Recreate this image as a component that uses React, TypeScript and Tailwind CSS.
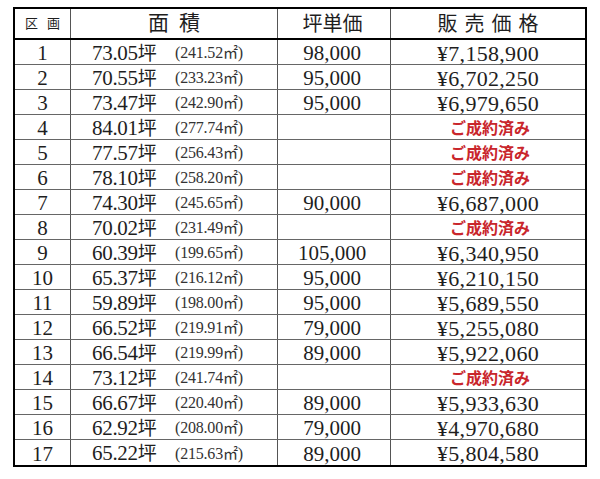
import React from "react";

type Lot = {
    no: number;
    tsubo: string;
    sqm: string;
    unit?: string;
    price?: string;
};

const lots: Lot[] = [
    { no: 1, tsubo: "73.05", sqm: "241.52", unit: "98,000", price: "¥7,158,900" },
    { no: 2, tsubo: "70.55", sqm: "233.23", unit: "95,000", price: "¥6,702,250" },
    { no: 3, tsubo: "73.47", sqm: "242.90", unit: "95,000", price: "¥6,979,650" },
    { no: 4, tsubo: "84.01", sqm: "277.74" },
    { no: 5, tsubo: "77.57", sqm: "256.43" },
    { no: 6, tsubo: "78.10", sqm: "258.20" },
    { no: 7, tsubo: "74.30", sqm: "245.65", unit: "90,000", price: "¥6,687,000" },
    { no: 8, tsubo: "70.02", sqm: "231.49" },
    { no: 9, tsubo: "60.39", sqm: "199.65", unit: "105,000", price: "¥6,340,950" },
    { no: 10, tsubo: "65.37", sqm: "216.12", unit: "95,000", price: "¥6,210,150" },
    { no: 11, tsubo: "59.89", sqm: "198.00", unit: "95,000", price: "¥5,689,550" },
    { no: 12, tsubo: "66.52", sqm: "219.91", unit: "79,000", price: "¥5,255,080" },
    { no: 13, tsubo: "66.54", sqm: "219.99", unit: "89,000", price: "¥5,922,060" },
    { no: 14, tsubo: "73.12", sqm: "241.74" },
    { no: 15, tsubo: "66.67", sqm: "220.40", unit: "89,000", price: "¥5,933,630" },
    { no: 16, tsubo: "62.92", sqm: "208.00", unit: "79,000", price: "¥4,970,680" },
    { no: 17, tsubo: "65.22", sqm: "215.63", unit: "89,000", price: "¥5,804,580" },
];

const serif = "font-['Liberation_Serif','Noto_Sans_CJK_JP',serif]";

export default function App() {
    return (
        <div className={`w-[600px] h-[479px] bg-white pt-[7px] pl-[13px] text-[#1e1e1e] ${serif}`}>
            <div className="w-[574px] border-2 border-black">
                {/* header */}
                <div className="flex h-[31px] border-b-2 border-black">
                    <div className="w-[56px] border-r border-[#555] flex items-center justify-center whitespace-nowrap text-[13px] tracking-[9px] pl-[9px]">
                        区画
                    </div>
                    <div className="w-[207px] border-r border-[#555] flex items-center justify-center text-[21px] tracking-[10px] pl-[10px]">
                        面積
                    </div>
                    <div className="w-[113px] border-r border-[#555] flex items-center justify-center text-[20px] pr-[3px]">
                        坪単価
                    </div>
                    <div className="flex-1 flex items-center justify-center text-[20px] tracking-[7px] pl-[7px]">
                        販売価格
                    </div>
                </div>

                {lots.map((lot, i) => (
                    <div
                        key={lot.no}
                        className={`flex h-[25px] ${i < lots.length - 1 ? "border-b border-[#666]" : ""}`}
                    >
                        <div className="w-[56px] border-r border-[#555] flex items-center justify-center text-[21px] leading-none pt-[3px]">
                            {lot.no}
                        </div>
                        <div className="w-[207px] border-r border-[#555] flex items-center pl-[21px] leading-none pt-[2px]">
                            <span className="w-[83px] text-[21px] tracking-[-0.3px]">
                                {lot.tsubo}
                                <span className="text-[19px] tracking-[-2px]">坪</span>
                            </span>
                            <span className="text-[16px] tracking-[-0.2px] text-[#333]">
                                ({lot.sqm}
                                <span className="text-[15px]">㎡</span>)
                            </span>
                        </div>
                        <div className="w-[113px] border-r border-[#555] flex items-center justify-center text-[21px] leading-none pt-[3px] pr-[4px]">
                            {lot.unit ?? ""}
                        </div>
                        <div className="flex-1 flex items-center justify-center leading-none">
                            {lot.price ? (
                                <span className="text-[22px] pt-[3px] tracking-[0.3px]">{lot.price}</span>
                            ) : (
                                <span className="font-['Noto_Sans_CJK_JP',sans-serif] font-bold text-[16px] text-[#c9262c] pl-[4px]">
                                    ご成約済み
                                </span>
                            )}
                        </div>
                    </div>
                ))}
            </div>
        </div>
    );
}
